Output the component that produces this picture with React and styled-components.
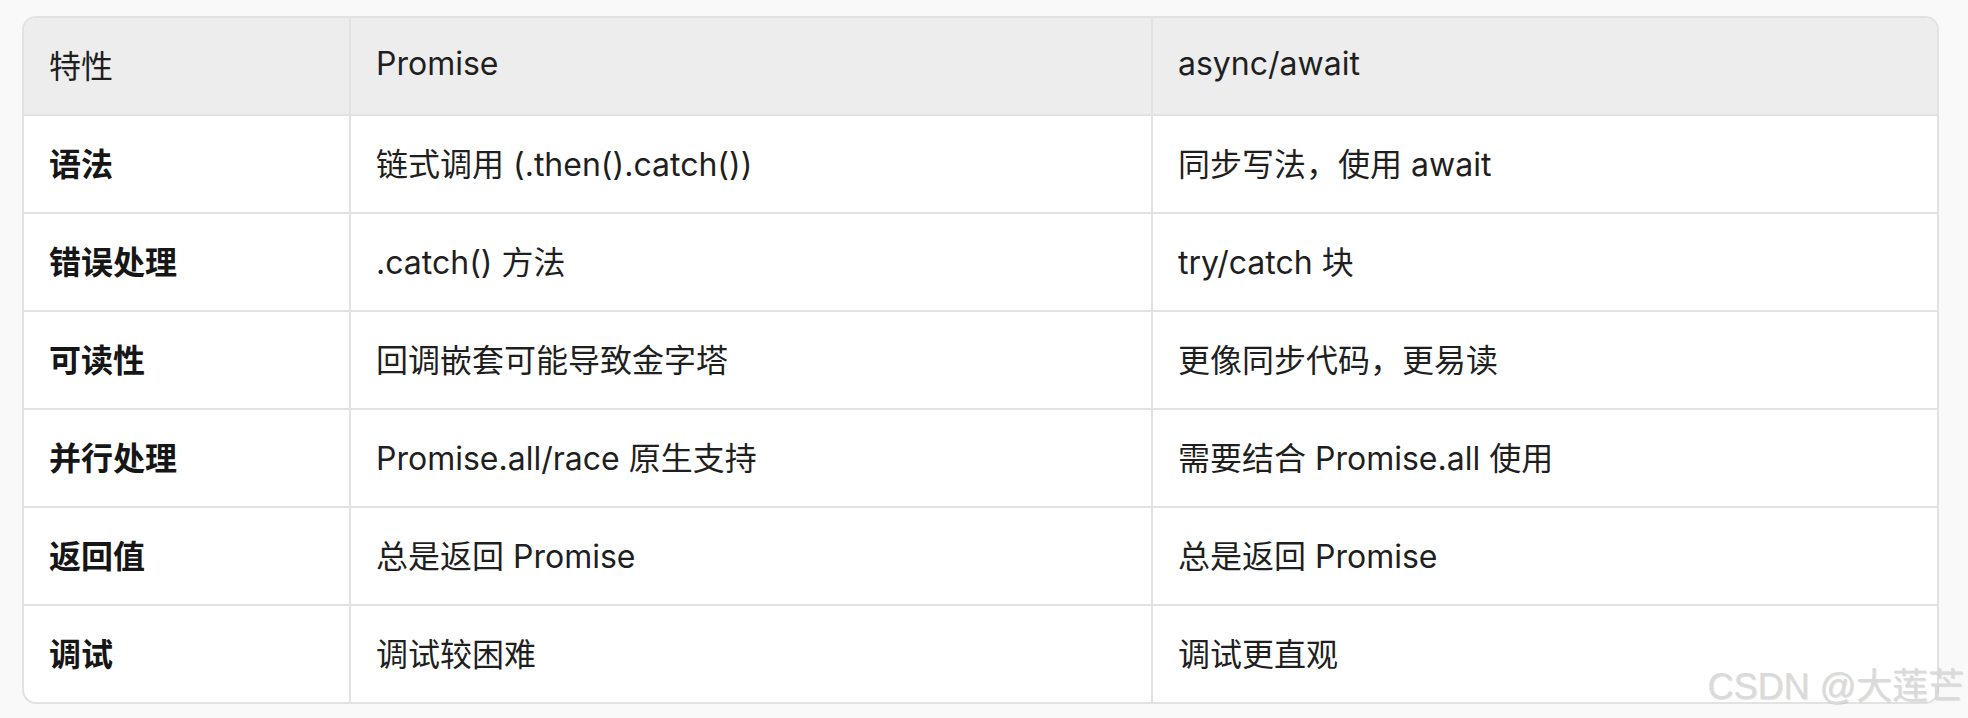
import React from 'react'
import styled, { createGlobalStyle } from 'styled-components'

const GlobalStyle = createGlobalStyle`
  html, body {
    margin: 0;
    padding: 0;
    background: #f9f9f9;
  }
  body {
    font-family: Inter, "Noto Sans CJK SC", sans-serif;
  }
`

const Page = styled.div`
  position: relative;
  width: 1968px;
  height: 718px;
  padding: 16px 0 0 22px;
  box-sizing: border-box;
`

const TableWrap = styled.div`
  width: 1917px;
  border: 2px solid #e2e2e2;
  border-radius: 14px;
  overflow: hidden;
  background: #fff;
  box-sizing: border-box;
`

const Table = styled.table`
  width: 100%;
  border-collapse: collapse;
  table-layout: fixed;
  font-size: 32px;
  color: #1f1f1f;
`

const HeadCell = styled.th`
  background: #ededed;
  height: 91px;
  padding: 0 0 5px 25px;
  text-align: left;
  font-weight: 400;
  border-left: 2px solid #e2e2e2;
  border-bottom: 2px solid #e2e2e2;

  &:first-child {
    border-left: none;
  }
`

const Cell = styled.td`
  height: 91px;
  padding: 0 0 5px 25px;
  font-weight: ${p => (p.$bold ? 700 : 400)};
  color: ${p => (p.$bold ? '#161616' : '#1f1f1f')};
  border-left: 2px solid #e2e2e2;
  border-top: 2px solid #e2e2e2;

  &:first-child {
    border-left: none;
  }
`

const Row = styled.tr`
  &:first-child td {
    border-top: none;
  }
`

const Watermark = styled.div`
  position: absolute;
  right: 4px;
  bottom: 13px;
  font-family: "Liberation Sans", "Noto Sans CJK SC", sans-serif;
  font-size: 36px;
  line-height: 1;
  color: #dadada;
  text-shadow: 1px 1px 1px rgba(0, 0, 0, 0.12);
`

const rows = [
  ['语法', '链式调用 (.then().catch())', '同步写法，使用 await'],
  ['错误处理', '.catch() 方法', 'try/catch 块'],
  ['可读性', '回调嵌套可能导致金字塔', '更像同步代码，更易读'],
  ['并行处理', 'Promise.all/race 原生支持', '需要结合 Promise.all 使用'],
  ['返回值', '总是返回 Promise', '总是返回 Promise'],
  ['调试', '调试较困难', '调试更直观']
]

export default function App() {
  return (
    <Page>
      <GlobalStyle />
      <TableWrap>
        <Table>
          <colgroup>
            <col style={{ width: 326 }} />
            <col style={{ width: 802 }} />
            <col />
          </colgroup>
          <thead>
            <tr>
              <HeadCell>特性</HeadCell>
              <HeadCell>Promise</HeadCell>
              <HeadCell>async/await</HeadCell>
            </tr>
          </thead>
          <tbody>
            {rows.map(([feature, promise, asyncAwait]) => (
              <Row key={feature}>
                <Cell $bold>{feature}</Cell>
                <Cell>{promise}</Cell>
                <Cell>{asyncAwait}</Cell>
              </Row>
            ))}
          </tbody>
        </Table>
      </TableWrap>
      <Watermark>CSDN @大莲芒</Watermark>
    </Page>
  )
}
